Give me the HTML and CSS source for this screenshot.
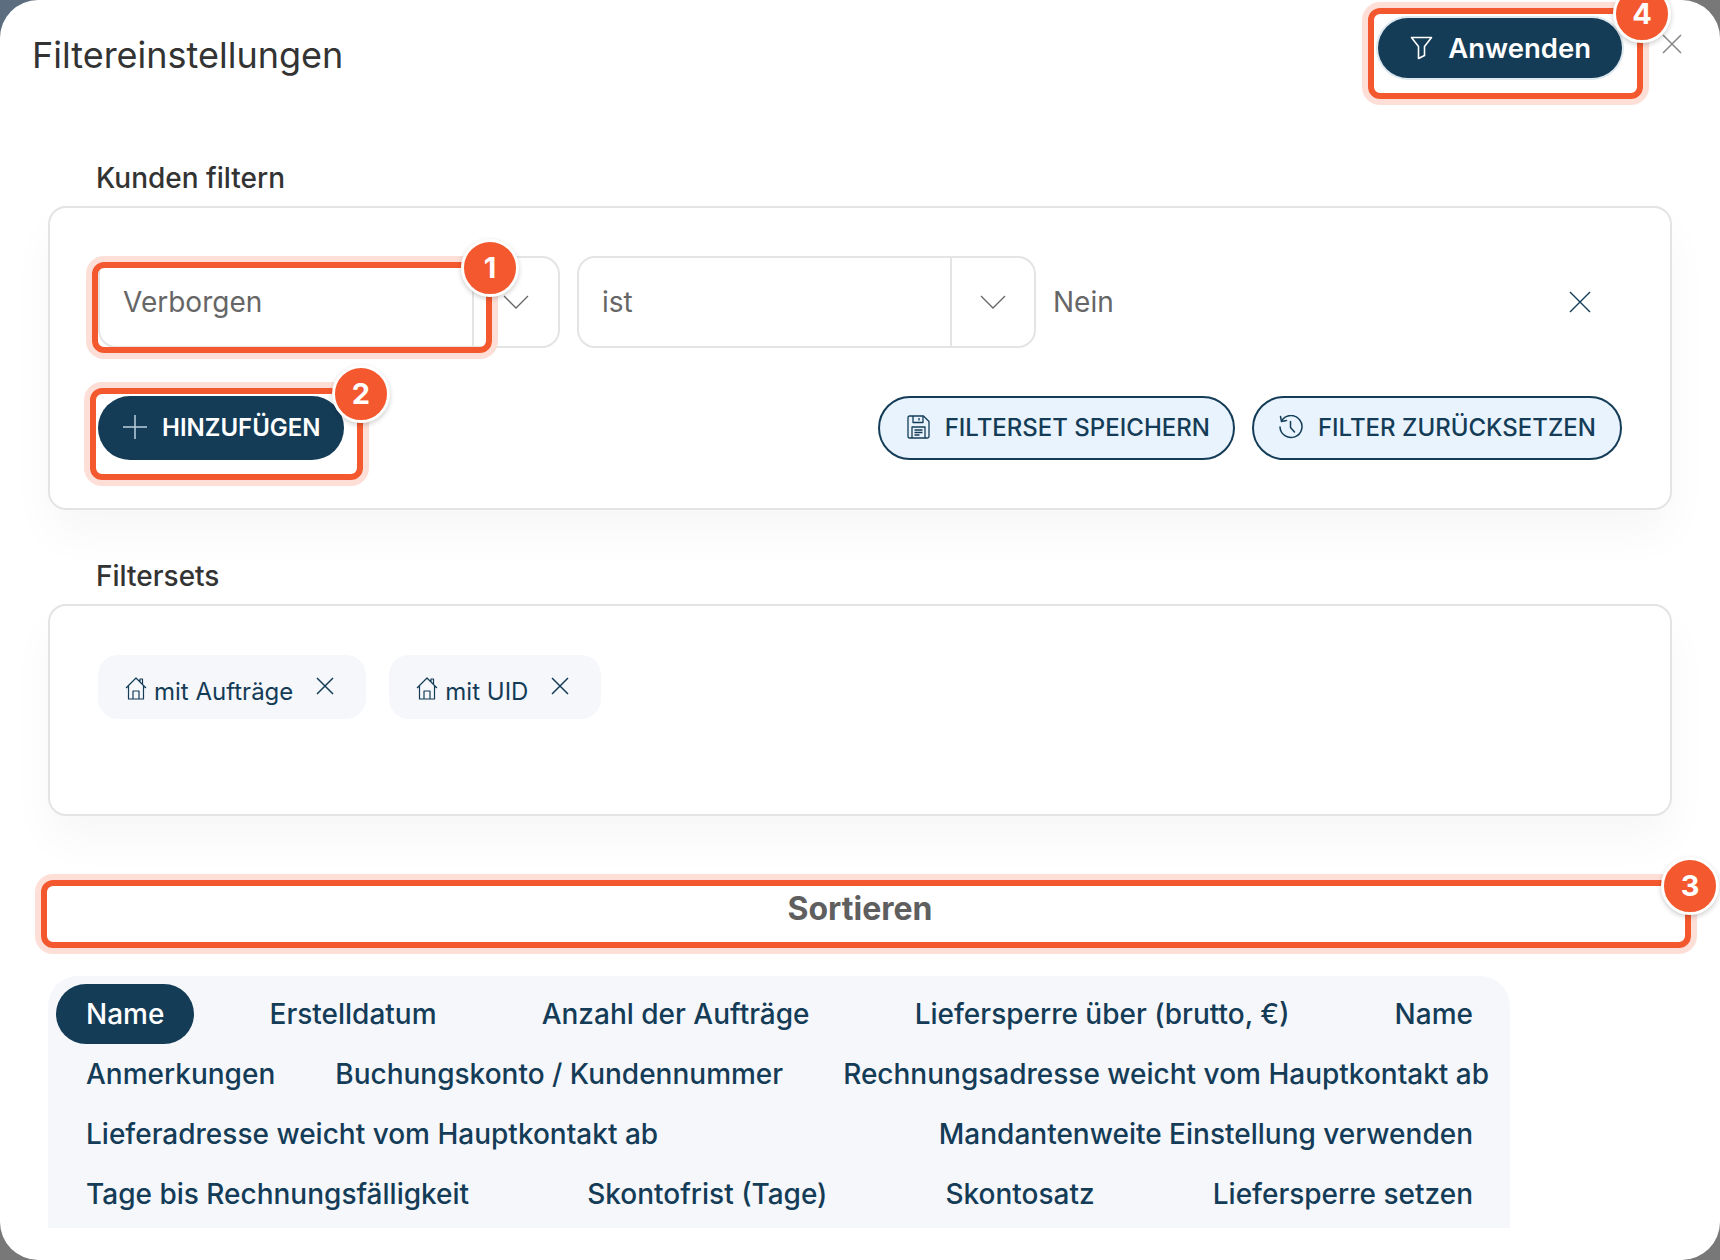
FILE: index.html
```html
<!DOCTYPE html>
<html lang="de">

<head>
    <meta charset="UTF-8">
    <title>Filtereinstellungen</title>
    <link rel="stylesheet" href="styles.css">
</head>

<body>
    <div class="dialog">
        <div class="dialog-header">
            <h1>Filtereinstellungen</h1>
            <button class="btn-apply">
                <svg width="23" height="24" viewBox="0 0 23 24" fill="none" stroke="#fff" stroke-width="1.6" stroke-linejoin="round"><path d="M1.500 1.500h20l-7 9v9l-6 3v-12z"/></svg>
                Anwenden
            </button>
            <svg class="dialog-close" width="22" height="22" viewBox="0 0 22 22" fill="none" stroke="#8a8a8a" stroke-width="1.6"><path d="M2 2l18 18M20 2L2 20"/></svg>
        </div>

        <div class="section-label">Kunden filtern</div>
        <div class="card">
            <div class="filter-row">
                <div class="select select-field">
                    <div class="select-value">Verborgen</div>
                    <div class="select-arrow"><svg width="26" height="14" viewBox="0 0 26 14" fill="none" stroke="#666" stroke-width="1.300"><path d="M1 1l12 12L25 1"/></svg></div>
                </div>
                <div class="select select-op">
                    <div class="select-value">ist</div>
                    <div class="select-arrow"><svg width="26" height="14" viewBox="0 0 26 14" fill="none" stroke="#666" stroke-width="1.300"><path d="M1 1l12 12L25 1"/></svg></div>
                </div>
                <div class="filter-value">Nein</div>
                <svg class="filter-remove" width="24" height="24" viewBox="0 0 24 24" fill="none" stroke="#143c57" stroke-width="1.400"><path d="M2 2l20 20M22 2L2 22"/></svg>
            </div>
            <div class="action-row">
                <button class="btn btn-primary">
                    <svg width="24" height="24" viewBox="0 0 24 24" fill="none" stroke="#b9cfdd" stroke-width="1.500"><path d="M12 0v24M0 12h24"/></svg>
                    HINZUFÜGEN
                </button>
                <button class="btn btn-outline btn-push">
                    <svg width="23" height="24" viewBox="0 0 23 24" fill="none" stroke="#143c57" stroke-width="1.300" stroke-linejoin="round"><path d="M2.500 1h14l5.500 5.500v15a1.500 1.500 0 0 1-1.500 1.500h-18a1.500 1.500 0 0 1-1.500-1.500v-19a1.500 1.500 0 0 1 1.500-1.500z"/><path d="M6 1v6.500h10V1M12 3v2.500M5 23V12h13v11M7.500 15h8M7.500 17.500h8M7.500 20h5"/></svg>
                    FILTERSET SPEICHERN
                </button>
                <button class="btn btn-outline">
                    <svg width="25" height="24" viewBox="0 0 25 24" fill="none" stroke="#143c57" stroke-width="1.500" stroke-linecap="round" stroke-linejoin="round"><path d="M3.800 5.500A11 11 0 1 1 2 12"/><path d="M2.500 1.500l1 5 5-1M12.500 6.500v6l4 4.500"/></svg>
                    FILTER ZURÜCKSETZEN
                </button>
            </div>
        </div>

        <div class="section-label section-label-next">Filtersets</div>
        <div class="card card-sets">
            <div class="chip">
                <svg class="chip-home" width="22" height="23" viewBox="0 0 22 23" fill="none" stroke="#143c57" stroke-width="1.200" stroke-linejoin="round"><path d="M1 11L11 1l10 10M3.500 9v13h15V9M8 22v-8h6v8M15 5V2h2.500v5.500"/></svg>
                <span>mit Aufträge</span>
                <svg class="chip-x" width="18" height="18" viewBox="0 0 18 18" fill="none" stroke="#143c57" stroke-width="1.500"><path d="M1 1l16 16M17 1L1 17"/></svg>
            </div>
            <div class="chip">
                <svg class="chip-home" width="22" height="23" viewBox="0 0 22 23" fill="none" stroke="#143c57" stroke-width="1.200" stroke-linejoin="round"><path d="M1 11L11 1l10 10M3.500 9v13h15V9M8 22v-8h6v8M15 5V2h2.500v5.500"/></svg>
                <span>mit UID</span>
                <svg class="chip-x" width="18" height="18" viewBox="0 0 18 18" fill="none" stroke="#143c57" stroke-width="1.500"><path d="M1 1l16 16M17 1L1 17"/></svg>
            </div>
        </div>

        <div class="sort-title">Sortieren</div>
        <div class="sort-tabs">
            <div class="sort-row">
                <div class="sort-tab active">Name</div>
                <div class="sort-tab">Erstelldatum</div>
                <div class="sort-tab">Anzahl der Aufträge</div>
                <div class="sort-tab">Liefersperre über (brutto, €)</div>
                <div class="sort-tab">Name</div>
            </div>
            <div class="sort-row">
                <div class="sort-tab">Anmerkungen</div>
                <div class="sort-tab">Buchungskonto / Kundennummer</div>
                <div class="sort-tab">Rechnungsadresse weicht vom Hauptkontakt ab</div>
            </div>
            <div class="sort-row">
                <div class="sort-tab">Lieferadresse weicht vom Hauptkontakt ab</div>
                <div class="sort-tab">Mandantenweite Einstellung verwenden</div>
            </div>
            <div class="sort-row">
                <div class="sort-tab">Tage bis Rechnungsfälligkeit</div>
                <div class="sort-tab">Skontofrist (Tage)</div>
                <div class="sort-tab">Skontosatz</div>
                <div class="sort-tab">Liefersperre setzen</div>
            </div>
        </div>

        <!-- orange tutorial markers on top of the dialog -->
        <div class="mark mark-1"><span class="badge">1</span></div>
        <div class="mark mark-2"><span class="badge">2</span></div>
        <div class="mark mark-3"><span class="badge">3</span></div>
        <div class="mark mark-4"><span class="badge">4</span></div>
    </div>
</body>

</html>
```

FILE: styles.css
```css
body {
    margin: 0;
    padding: 0;
    width: 1720px;
    height: 1260px;
    overflow: hidden;
    background: linear-gradient(#5b6d7e, #5b6d7e) 0 0 / 60px 60px no-repeat, #787878;
    font-family: Inter, "Noto Sans", sans-serif;
}

button {
    font-family: inherit;
}

.dialog {
    position: relative;
    box-sizing: border-box;
    width: 1720px;
    height: 1260px;
    padding: 0 48px;
    background-color: #fff;
    border-radius: 38px;
    overflow: hidden;
}

.dialog-header {
    display: flex;
    align-items: flex-start;
    height: 150px;
    margin: 0 -11px 0 -16px;
    padding-top: 18px;
    box-sizing: border-box;
}

.dialog-header h1 {
    margin: 0;
    font-size: 36px;
    font-weight: 400;
    line-height: 74px;
    color: #333;
}

.btn-apply {
    display: flex;
    align-items: center;
    gap: 15px;
    height: 60px;
    margin-left: auto;
    padding: 0 31px 0 32px;
    border: none;
    border-radius: 30px;
    background-color: #143c57;
    box-shadow: 0 0 0 2px #dfe8ef;
    color: #fff;
    font-size: 27.500px;
    font-weight: 600;
}

.dialog-close {
    margin: 15px 0 0 39px;
}

.section-label {
    margin-left: 48px;
    font-size: 28px;
    font-weight: 500;
    line-height: 56px;
    color: #333;
}

.section-label-next {
    margin-top: 38px;
}

.card {
    box-sizing: border-box;
    padding: 48px;
    background-color: #fff;
    border: 2px solid #e4e4e4;
    border-radius: 18px;
    box-shadow: 0 24px 44px rgba(0, 0, 0, 0.035);
}

.card-sets {
    display: flex;
    align-items: flex-start;
    gap: 23px;
    height: 212px;
    padding-top: 49px;
}

.filter-row {
    display: flex;
    align-items: center;
    gap: 17px;
    height: 92px;
}

.select {
    box-sizing: border-box;
    display: flex;
    height: 92px;
    border: 2px solid #e4e4e4;
    border-radius: 18px;
}

.select-field {
    width: 462px;
}

.select-op {
    width: 459px;
}

.select-value {
    flex: 1;
    padding-left: 23px;
    font-size: 28px;
    line-height: 88px;
    color: #666;
}

.select-arrow {
    display: flex;
    align-items: center;
    justify-content: center;
    width: 82px;
    border-left: 2px solid #e4e4e4;
}

.select-field .select-arrow {
    width: 84px;
}

.filter-value {
    font-size: 28px;
    color: #666;
}

.filter-remove {
    margin-left: auto;
    margin-right: 30px;
}

.action-row {
    display: flex;
    gap: 17px;
    margin-top: 48px;
}

.btn {
    box-sizing: border-box;
    display: flex;
    align-items: center;
    gap: 15px;
    height: 64px;
    padding: 0 24px 2px;
    border: 2px solid transparent;
    border-radius: 32px;
    font-size: 24px;
    font-weight: 500;
    white-space: nowrap;
}

.btn-primary {
    padding: 0 21px 2px 23px;
    background-color: #143c57;
    color: #fff;
    font-weight: 600;
}

.btn-outline {
    background-color: #e8f3fe;
    border-color: #143c57;
    color: #143c57;
}

.btn-push {
    margin-left: auto;
    padding-left: 27px;
    padding-right: 23px;
}

.chip {
    display: flex;
    align-items: center;
    height: 64px;
    padding: 0 32px 0 27px;
    background-color: #f5f7fb;
    border-radius: 20px;
    font-size: 24px;
    color: #143c57;
}

.chip span {
    margin: 8px 23px 0 7px;
}

.chip-home {
    margin-top: 2px;
}

.chip-x {
    margin-top: -2px;
}

.sort-title {
    margin-top: 64px;
    margin-bottom: 38px;
    font-size: 32px;
    font-weight: 700;
    line-height: 58px;
    text-align: center;
    color: #5f5f5f;
}

.sort-tabs {
    box-sizing: border-box;
    width: 1462px;
    height: 252px;
    padding: 8px 7px 4px 8px;
    background-color: #f5f7fb;
    border-radius: 30px 30px 0 0;
}

.sort-row {
    display: flex;
    justify-content: space-between;
    height: 60px;
}

.sort-tab {
    flex-shrink: 0;
    padding: 0 30px;
    font-size: 28px;
    font-weight: 500;
    line-height: 60px;
    color: #143c57;
    white-space: nowrap;
}

.sort-tab.active {
    background-color: #143c57;
    border-radius: 30px;
    color: #fff;
}

.mark {
    position: absolute;
    box-sizing: border-box;
    border: 6px solid #f4582e;
    border-radius: 12px;
    box-shadow: 0 0 0 6px #fddfd8;
}

.mark-1 {
    left: 92px;
    top: 262px;
    width: 400px;
    height: 91px;
}

.mark-2 {
    left: 90px;
    top: 388px;
    width: 273px;
    height: 92px;
}

.mark-3 {
    left: 41px;
    top: 880px;
    width: 1650px;
    height: 68px;
}

.mark-4 {
    left: 1368px;
    top: 8px;
    width: 275px;
    height: 91px;
}

.badge {
    position: absolute;
    right: -34px;
    top: -29px;
    box-sizing: border-box;
    width: 58px;
    height: 58px;
    border: 3px solid #fff;
    border-radius: 50%;
    background-color: #f4582e;
    box-shadow: 0 2px 5px rgba(0, 0, 0, 0.2);
    color: #fff;
    font-size: 29px;
    font-weight: 700;
    line-height: 52px;
    text-align: center;
}

.mark-1 .badge,
.mark-2 .badge {
    right: -33px;
}
```
